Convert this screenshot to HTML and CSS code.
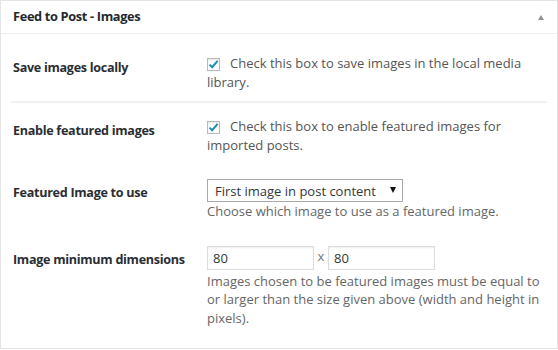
FILE: index.html
```html
<!DOCTYPE html>
<html>
<head>
<meta charset="utf-8">
<link rel="stylesheet" href="styles.css">
</head>
<body>
<div class="postbox">
  <div class="hndle">
    <h2 class="title">Feed to Post - Images</h2>
    <span class="toggle"></span>
  </div>
  <div class="inside">
    <div class="row sep">
      <div class="label">Save images locally</div>
      <div class="field">
        <label class="check"><span class="box"><svg width="11" height="11" viewBox="0 0 11 11"><path d="M1.5 5.6 L4.2 8.2 L9.6 1.8" fill="none" stroke="#1e8cbe" stroke-width="2"/></svg></span><span class="gap"></span>Check this box to save images in the local media library.</label>
      </div>
    </div>
    <div class="row">
      <div class="label">Enable featured images</div>
      <div class="field">
        <label class="check"><span class="box"><svg width="11" height="11" viewBox="0 0 11 11"><path d="M1.5 5.6 L4.2 8.2 L9.6 1.8" fill="none" stroke="#1e8cbe" stroke-width="2"/></svg></span><span class="gap"></span>Check this box to enable featured images for imported posts.</label>
      </div>
    </div>
    <div class="row">
      <div class="label">Featured Image to use</div>
      <div class="field">
        <div class="select-wrap">
          <select class="select"><option>First image in post content</option></select>
        </div>
        <p class="desc">Choose which image to use as a featured image.</p>
      </div>
    </div>
    <div class="row last">
      <div class="label">Image minimum dimensions</div>
      <div class="field">
        <div class="dims">
          <input class="num" type="text" value="80">
          <span class="times">x</span>
          <input class="num" type="text" value="80">
        </div>
        <p class="desc">Images chosen to be featured images must be equal to or larger than the size given above (width and height in pixels).</p>
      </div>
    </div>
  </div>
</div>
</body>
</html>
```

FILE: styles.css
```css
html, body {
  margin: 0;
  padding: 0;
  background: #ffffff;
}
body {
  font-family: "Open Sans", "Noto Sans", sans-serif;
  font-size: 13px;
  color: #444;
}
.postbox {
  width: 558px;
  box-sizing: border-box;
  border: 1px solid #e5e5e5;
  background: #fff;
}
.hndle {
  height: 32px;
  border-bottom: 1px solid #eeeeee;
  display: flex;
  align-items: center;
  justify-content: space-between;
  padding: 0 12px 0 12px;
}
.title {
  margin: 0;
  font-size: 12.8px;
  font-weight: 700;
  letter-spacing: -0.35px;
  color: #23282d;
  line-height: 1.4;
}
.toggle {
  width: 0;
  height: 0;
  border-left: 3.5px solid transparent;
  border-right: 3.5px solid transparent;
  border-bottom: 5px solid #8f9499;
  margin-right: 1px;
}
.inside {
  padding: 6px 10px 8px 10px;
}
.row {
  display: grid;
  grid-template-columns: 196px 1fr;
  padding: 0 0 11px 0;
}
.row.sep {
  border-bottom: 2px solid #f1f1f1;
  padding-bottom: 10px;
}
.row.last {
  padding-bottom: 13px;
}
.label {
  padding: 19px 0 0 2px;
  font-size: 12.6px;
  font-weight: 700;
  letter-spacing: -0.3px;
  color: #2a2e33;
  line-height: 18px;
}
.field {
  padding-top: 14px;
  line-height: 18.5px;
  color: #555;
  padding-right: 0;
}
.check {
  display: block;
}
.box {
  display: inline-flex;
  align-items: center;
  justify-content: center;
  width: 13px;
  height: 13px;
  box-sizing: border-box;
  border: 1px solid #b4b9be;
  box-shadow: inset 0 1px 2px rgba(0,0,0,0.1);
  vertical-align: -2px;
}
.box svg {
  display: block;
}
.gap {
  display: inline-block;
  width: 10px;
}
.select-wrap {
  position: relative;
  width: 196px;
  height: 23px;
}
.select {
  appearance: none;
  -webkit-appearance: none;
  width: 196px;
  height: 23px;
  box-sizing: border-box;
  border: 1px solid #a9a9a9;
  border-radius: 0;
  background: #fff;
  font-family: "Open Sans", "Noto Sans", sans-serif;
  font-size: 13px;
  color: #32373c;
  padding: 0 0 0 7px;
  margin: 0;
}
.select-wrap::after {
  content: "";
  position: absolute;
  right: 7px;
  top: 8px;
  border-left: 3.5px solid transparent;
  border-right: 3.5px solid transparent;
  border-top: 6px solid #111;
}
.desc {
  margin: 0;
  color: #666;
}
.dims {
  display: flex;
  align-items: center;
  height: 24px;
  margin-bottom: 2px;
}
.num {
  width: 107px;
  height: 24px;
  box-sizing: border-box;
  border: 1px solid #dddddd;
  box-shadow: inset 0 1px 2px rgba(0,0,0,0.07);
  font-family: "Open Sans", "Noto Sans", sans-serif;
  font-size: 13px;
  color: #32373c;
  padding: 0 0 0 5px;
  margin: 0;
  border-radius: 0;
  outline: none;
}
.times {
  width: 14px;
  text-align: center;
  color: #777;
  margin-top: -3px;
}
```
